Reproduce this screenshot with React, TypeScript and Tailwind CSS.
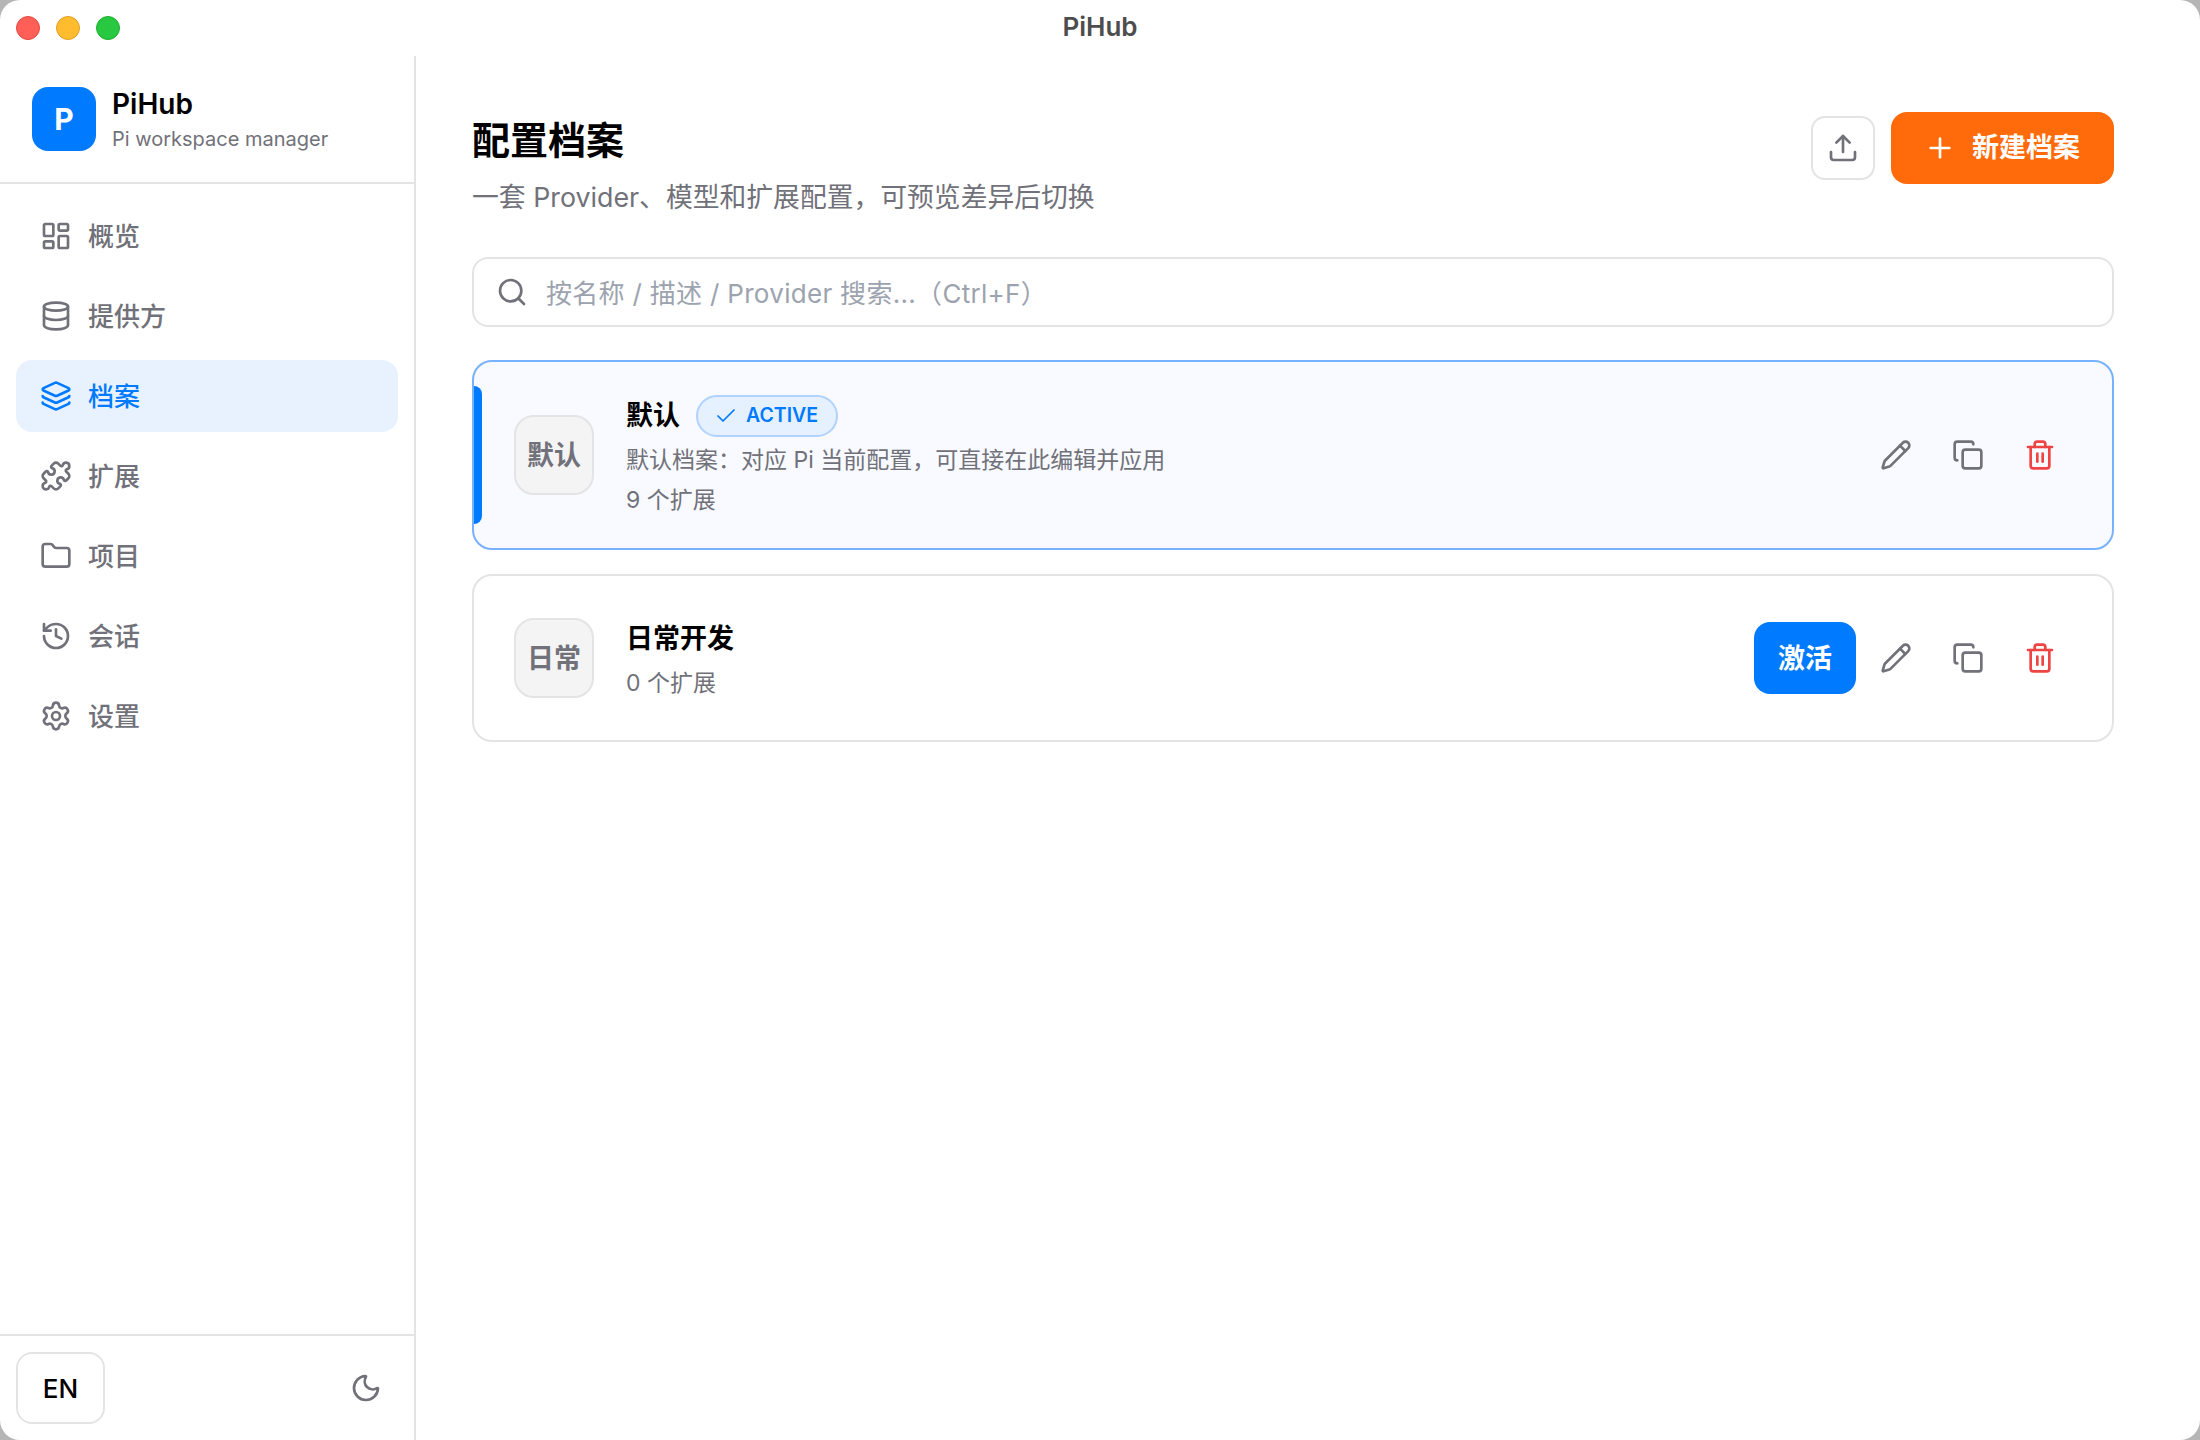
import { LayoutDashboard, Database, Layers, Puzzle, Folder, History, Settings, Upload, Plus, Search, Check, Pencil, Copy, Trash2, Moon } from "lucide-react";

const font = { fontFamily: 'Inter, "Noto Sans CJK SC", sans-serif' };

const nav = [
  { label: "概览", Icon: LayoutDashboard },
  { label: "提供方", Icon: Database },
  { label: "档案", Icon: Layers, active: true },
  { label: "扩展", Icon: Puzzle },
  { label: "项目", Icon: Folder },
  { label: "会话", Icon: History },
  { label: "设置", Icon: Settings },
];

function Actions() {
  return (
    <>
      <button className="flex h-16 w-16 items-center justify-center text-[#71717a]"><Pencil size={32} strokeWidth={2} /></button>
      <button className="flex h-16 w-16 items-center justify-center text-[#71717a]"><Copy size={32} strokeWidth={2} /></button>
      <button className="flex h-16 w-16 items-center justify-center text-[#ef4444]"><Trash2 size={32} strokeWidth={2} /></button>
    </>
  );
}

export default function App() {
  return (
    <div style={font} className="h-[1440px] w-[2200px] overflow-hidden bg-[#b5b5b5]">
      <div className="flex h-full w-full flex-col overflow-hidden rounded-[20px] bg-white">
        <header className="relative flex h-14 shrink-0 items-center justify-center pb-[3px]">
          <div className="absolute left-4 top-4 flex gap-4">
            <span className="h-6 w-6 rounded-full border border-[#e5483f] bg-[#ff5f57]" />
            <span className="h-6 w-6 rounded-full border border-[#dfa023] bg-[#febc2e]" />
            <span className="h-6 w-6 rounded-full border border-[#1fae33] bg-[#28c840]" />
          </div>
          <span className="text-[26px] font-semibold text-[#4d4d4d]">PiHub</span>
        </header>
        <div className="flex min-h-0 flex-1">
          <aside className="flex w-[416px] shrink-0 flex-col border-r-2 border-[#e4e4e7]">
            <div className="flex h-[128px] shrink-0 items-center gap-4 border-b-2 border-[#e4e4e7] px-8">
              <div className="flex h-16 w-16 items-center justify-center rounded-2xl bg-[#007aff] text-[30px] font-bold text-white">P</div>
              <div className="flex flex-col">
                <span className="text-[28px] font-semibold leading-[36px] text-black">PiHub</span>
                <span className="mt-[3px] text-[20px] leading-[28px] text-[#71717a]">Pi workspace manager</span>
              </div>
            </div>
            <nav className="flex flex-1 flex-col gap-2 p-4">
              {nav.map(({ label, Icon, active }) => (
                <div
                  key={label}
                  className={active
                    ? "flex h-[72px] items-center gap-4 rounded-2xl bg-[#e8f2ff] px-6 text-[26px] font-medium text-[#007aff]"
                    : "flex h-[72px] items-center gap-4 rounded-2xl px-6 text-[26px] font-medium text-[#71717a]"}
                >
                  <Icon size={32} strokeWidth={2} />
                  <span>{label}</span>
                </div>
              ))}
            </nav>
            <div className="flex h-[106px] shrink-0 items-center justify-between border-t-2 border-[#e4e4e7] pl-4 pr-[32px]">
              <button className="flex h-[72px] w-[89px] items-center justify-center rounded-2xl border-2 border-[#e4e4e7] text-[26px] font-medium text-black">EN</button>
              <Moon size={32} strokeWidth={2} className="text-[#71717a]" />
            </div>
          </aside>
          <main className="flex min-w-0 flex-1 flex-col pl-14 pr-[86px]">
            <div className="flex h-[201px] shrink-0 items-start justify-between pt-14">
              <div className="mt-[2px] flex flex-col">
                <h1 className="text-[38px] font-bold leading-[52px] text-black">配置档案</h1>
                <p className="mt-[11px] text-[26.8px] leading-[40px] text-[#71717a]">一套 Provider、模型和扩展配置，可预览差异后切换</p>
              </div>
              <div className="flex items-center gap-4">
                <button className="flex h-16 w-16 items-center justify-center rounded-[14px] border-2 border-[#e4e4e7] text-[#71717a]"><Upload size={32} strokeWidth={2} /></button>
                <button className="flex h-[72px] w-[223px] items-center gap-4 rounded-2xl bg-[#ff6a0a] pl-[33px] text-[27px] font-semibold text-white"><Plus size={32} strokeWidth={2} /><span>新建档案</span></button>
              </div>
            </div>
            <div className="flex h-[70px] shrink-0 items-center gap-[18px] rounded-2xl border-2 border-[#e4e4e7] pl-[22px]">
              <Search size={32} strokeWidth={2} className="text-[#71717a]" />
              <span className="pt-[2px] text-[26px] tracking-[0.3px] text-[#9ca3af]">按名称 / 描述 / Provider 搜索...（Ctrl+F）</span>
            </div>
            <div className="mt-[33px] flex flex-col gap-6">
              <div className="relative flex h-[190px] items-center gap-8 rounded-[20px] border-2 border-[#78b2ff] bg-[#f8faff] px-10">
                <span className="absolute left-0 top-[24px] h-[138px] w-2 rounded-r-lg bg-[#007aff]" />
                <div className="flex h-20 w-20 shrink-0 items-center justify-center rounded-[20px] border-2 border-[#e4e4e7] bg-[#f4f4f5] pt-[3px] text-[27px] font-bold text-[#71717a]">默认</div>
                <div className="flex min-w-0 flex-1 flex-col pt-[4px]">
                  <div className="flex h-[42px] items-center gap-4">
                    <span className="pt-[2px] text-[27px] font-bold text-black">默认</span>
                    <span className="flex h-[42px] w-[142px] items-center gap-[8px] rounded-full border-2 border-[#b0d2ff] bg-[#e6f1ff] pl-[16px] text-[19.5px] font-semibold text-[#007aff]"><Check size={24} strokeWidth={1.75} />ACTIVE</span>
                  </div>
                  <p className="mt-[3px] text-[23px] leading-[40px] text-[#71717a]">默认档案：对应 Pi 当前配置，可直接在此编辑并应用</p>
                  <p className="text-[23px] leading-[40px] text-[#71717a]">9 个扩展</p>
                </div>
                <div className="flex items-center gap-2"><Actions /></div>
              </div>
              <div className="flex h-[168px] items-center gap-8 rounded-[20px] border-2 border-[#e4e4e7] bg-white px-10">
                <div className="flex h-20 w-20 shrink-0 items-center justify-center rounded-[20px] border-2 border-[#e4e4e7] bg-[#f4f4f5] pt-[2px] text-[27px] font-bold text-[#71717a]">日常</div>
                <div className="flex min-w-0 flex-1 flex-col pt-[6px]">
                  <span className="text-[27px] font-bold leading-[40px] text-black">日常开发</span>
                  <p className="mt-1 text-[23px] leading-[40px] text-[#71717a]">0 个扩展</p>
                </div>
                <div className="flex items-center gap-2">
                  <button className="flex h-[72px] w-[102px] items-center justify-center rounded-2xl bg-[#007aff] pt-[2px] text-[27px] font-semibold text-white">激活</button>
                  <Actions />
                </div>
              </div>
            </div>
          </main>
        </div>
      </div>
    </div>
  );
}
